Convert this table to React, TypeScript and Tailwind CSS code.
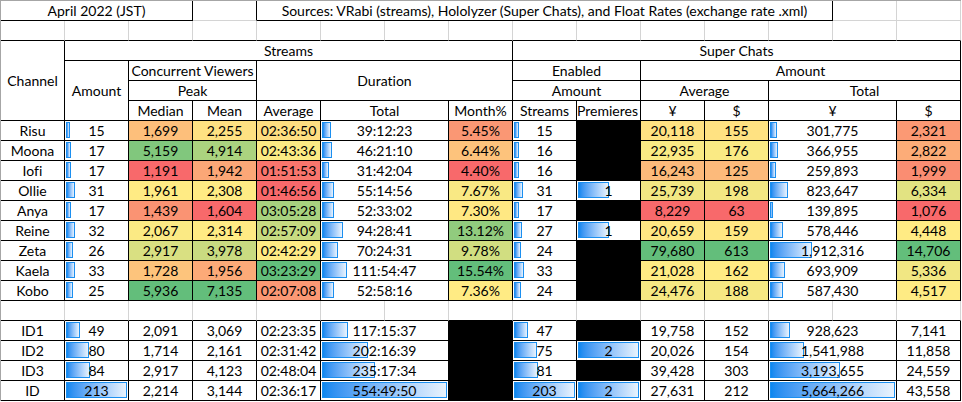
import React from 'react';

type Row = {
  name: string;
  amount: number;
  median: number;
  mean: number;
  avg: string;
  total: string;
  month: number | null;
  scStreams: number;
  premieres: number | null;
  yenAvg: number;
  usdAvg: number;
  yenTotal: number;
  usdTotal: number;
};

const members: Row[] = [
  { name: 'Risu', amount: 15, median: 1699, mean: 2255, avg: '02:36:50', total: '39:12:23', month: 5.45, scStreams: 15, premieres: null, yenAvg: 20118, usdAvg: 155, yenTotal: 301775, usdTotal: 2321 },
  { name: 'Moona', amount: 17, median: 5159, mean: 4914, avg: '02:43:36', total: '46:21:10', month: 6.44, scStreams: 16, premieres: null, yenAvg: 22935, usdAvg: 176, yenTotal: 366955, usdTotal: 2822 },
  { name: 'Iofi', amount: 17, median: 1191, mean: 1942, avg: '01:51:53', total: '31:42:04', month: 4.4, scStreams: 16, premieres: null, yenAvg: 16243, usdAvg: 125, yenTotal: 259893, usdTotal: 1999 },
  { name: 'Ollie', amount: 31, median: 1961, mean: 2308, avg: '01:46:56', total: '55:14:56', month: 7.67, scStreams: 31, premieres: 1, yenAvg: 25739, usdAvg: 198, yenTotal: 823647, usdTotal: 6334 },
  { name: 'Anya', amount: 17, median: 1439, mean: 1604, avg: '03:05:28', total: '52:33:02', month: 7.3, scStreams: 17, premieres: null, yenAvg: 8229, usdAvg: 63, yenTotal: 139895, usdTotal: 1076 },
  { name: 'Reine', amount: 32, median: 2067, mean: 2314, avg: '02:57:09', total: '94:28:41', month: 13.12, scStreams: 27, premieres: 1, yenAvg: 20659, usdAvg: 159, yenTotal: 578446, usdTotal: 4448 },
  { name: 'Zeta', amount: 26, median: 2917, mean: 3978, avg: '02:42:29', total: '70:24:31', month: 9.78, scStreams: 24, premieres: null, yenAvg: 79680, usdAvg: 613, yenTotal: 1912316, usdTotal: 14706 },
  { name: 'Kaela', amount: 33, median: 1728, mean: 1956, avg: '03:23:29', total: '111:54:47', month: 15.54, scStreams: 33, premieres: null, yenAvg: 21028, usdAvg: 162, yenTotal: 693909, usdTotal: 5336 },
  { name: 'Kobo', amount: 25, median: 5936, mean: 7135, avg: '02:07:08', total: '52:58:16', month: 7.36, scStreams: 24, premieres: null, yenAvg: 24476, usdAvg: 188, yenTotal: 587430, usdTotal: 4517 },
];

const groups: Row[] = [
  { name: 'ID1', amount: 49, median: 2091, mean: 3069, avg: '02:23:35', total: '117:15:37', month: null, scStreams: 47, premieres: null, yenAvg: 19758, usdAvg: 152, yenTotal: 928623, usdTotal: 7141 },
  { name: 'ID2', amount: 80, median: 1714, mean: 2161, avg: '02:31:42', total: '202:16:39', month: null, scStreams: 75, premieres: 2, yenAvg: 20026, usdAvg: 154, yenTotal: 1541988, usdTotal: 11858 },
  { name: 'ID3', amount: 84, median: 2917, mean: 4123, avg: '02:48:04', total: '235:17:34', month: null, scStreams: 81, premieres: null, yenAvg: 39428, usdAvg: 303, yenTotal: 3193655, usdTotal: 24559 },
  { name: 'ID', amount: 213, median: 2214, mean: 3144, avg: '02:36:17', total: '554:49:50', month: null, scStreams: 203, premieres: 2, yenAvg: 27631, usdAvg: 212, yenTotal: 5664266, usdTotal: 43558 },
];

const secs = (t: string) => {
  const [h, m, s] = t.split(':').map(Number);
  return h * 3600 + m * 60 + s;
};

const fmt = (n: number) => n.toLocaleString('en-US');

// Excel-style 3 colour scale: red -> yellow (50th percentile) -> green
const RED = [248, 105, 107];
const YEL = [255, 235, 132];
const GRN = [99, 190, 123];

function colorScale(values: number[]) {
  const sorted = [...values].sort((a, b) => a - b);
  const min = sorted[0];
  const max = sorted[sorted.length - 1];
  const mid = sorted[Math.floor(sorted.length / 2)];
  return (v: number) => {
    let from = RED, to = YEL, t = 0;
    if (v <= mid) {
      t = mid === min ? 0 : (v - min) / (mid - min);
    } else {
      from = YEL;
      to = GRN;
      t = max === mid ? 1 : (v - mid) / (max - mid);
    }
    const c = from.map((f, i) => Math.round(f + (to[i] - f) * t));
    return `rgb(${c[0]},${c[1]},${c[2]})`;
  };
}

const medianColor = colorScale(members.map(m => m.median));
const meanColor = colorScale(members.map(m => m.mean));
const avgColor = colorScale(members.map(m => secs(m.avg)));
const monthColor = colorScale(members.map(m => m.month ?? 0));
const yenAvgColor = colorScale(members.map(m => m.yenAvg));
const usdAvgColor = colorScale(members.map(m => m.usdAvg));
const usdTotalColor = colorScale(members.map(m => m.usdTotal));

const maxAmount = 213;
const maxTotal = secs('554:49:50');
const maxScStreams = 203;
const maxPremieres = 2;
const maxYenTotal = 5664266;

type CellProps = {
  className?: string;
  gr?: boolean;
  gb?: boolean;
  style?: React.CSSProperties;
  children?: React.ReactNode;
};

const Cell: React.FC<CellProps> = ({ className = '', gr, gb, style, children }) => (
  <div
    style={style}
    className={`relative flex items-center justify-center overflow-hidden whitespace-nowrap border-r border-b ${
      gr ? 'border-r-[#d4d4d4]' : 'border-r-black'
    } ${gb ? 'border-b-[#d4d4d4]' : 'border-b-black'} ${className}`}
  >
    {children}
  </div>
);

const Bar: React.FC<{ value: number; max: number; wide?: boolean }> = ({ value, max, wide }) => (
  <div
    className="absolute left-[1px] top-[1px] bottom-[2px] border border-[#1b8ff0] bg-linear-to-r from-[#0a87ef] to-[#e9f3fd]"
    style={{ width: Math.max(3, Math.round((value / max) * (wide ? 125 : 61))) }}
  />
);

const Txt: React.FC<{ children: React.ReactNode }> = ({ children }) => (
  <span className="relative pt-px">{children}</span>
);

function DataRow({ r, group }: { r: Row; group?: boolean }) {
  const bg = (fn: (v: number) => string, v: number) => (group ? undefined : { backgroundColor: fn(v) });
  return (
    <>
      <Cell><Txt>{r.name}</Txt></Cell>
      <Cell><Bar value={r.amount} max={maxAmount} /><Txt>{r.amount}</Txt></Cell>
      <Cell style={bg(medianColor, r.median)}><Txt>{fmt(r.median)}</Txt></Cell>
      <Cell style={bg(meanColor, r.mean)}><Txt>{fmt(r.mean)}</Txt></Cell>
      <Cell style={bg(avgColor, secs(r.avg))}><Txt>{r.avg}</Txt></Cell>
      <Cell className="col-span-2"><Bar value={secs(r.total)} max={maxTotal} wide /><Txt>{r.total}</Txt></Cell>
      {r.month === null ? (
        <Cell className="bg-black" />
      ) : (
        <Cell style={bg(monthColor, r.month)}><Txt>{r.month.toFixed(2)}%</Txt></Cell>
      )}
      <Cell><Bar value={r.scStreams} max={maxScStreams} /><Txt>{r.scStreams}</Txt></Cell>
      {r.premieres === null ? (
        <Cell className="bg-black" />
      ) : (
        <Cell><Bar value={r.premieres} max={maxPremieres} /><Txt>{r.premieres}</Txt></Cell>
      )}
      <Cell style={bg(yenAvgColor, r.yenAvg)}><Txt>{fmt(r.yenAvg)}</Txt></Cell>
      <Cell style={bg(usdAvgColor, r.usdAvg)}><Txt>{fmt(r.usdAvg)}</Txt></Cell>
      <Cell className="col-span-2"><Bar value={r.yenTotal} max={maxYenTotal} wide /><Txt>{fmt(r.yenTotal)}</Txt></Cell>
      <Cell style={bg(usdTotalColor, r.usdTotal)}><Txt>{fmt(r.usdTotal)}</Txt></Cell>
    </>
  );
}

const fifteen = Array.from({ length: 15 }, (_, i) => i);

export default function App() {
  return (
    <div className="min-h-screen bg-white text-black font-['Lato','Liberation_Sans',sans-serif] text-[14px] leading-none [font-variant-ligatures:none]">
      <div className="grid w-fit grid-cols-[repeat(15,64px)] auto-rows-[20px] border-t border-l border-[#a6a6a6]">
        {/* title row */}
        <Cell className="col-span-3"><Txt>April 2022 (JST)</Txt></Cell>
        <Cell gb />
        <Cell className="col-span-9">
          <Txt>Sources: VRabi (streams), Hololyzer (Super Chats), and Float Rates (exchange rate .xml)</Txt>
        </Cell>
        <Cell gr gb />
        <Cell gr gb />

        {/* spacer row */}
        {fifteen.map(i => (
          <Cell key={`s${i}`} gr />
        ))}

        {/* headers */}
        <Cell className="row-span-4"><Txt>Channel</Txt></Cell>
        <Cell className="col-span-7"><Txt>Streams</Txt></Cell>
        <Cell className="col-span-7"><Txt>Super Chats</Txt></Cell>

        <Cell className="row-span-3"><Txt>Amount</Txt></Cell>
        <Cell className="col-span-2"><Txt>Concurrent Viewers</Txt></Cell>
        <Cell className="col-span-4 row-span-2"><Txt>Duration</Txt></Cell>
        <Cell className="col-span-2"><Txt>Enabled</Txt></Cell>
        <Cell className="col-span-5"><Txt>Amount</Txt></Cell>

        <Cell className="col-span-2"><Txt>Peak</Txt></Cell>
        <Cell className="col-span-2"><Txt>Amount</Txt></Cell>
        <Cell className="col-span-2"><Txt>Average</Txt></Cell>
        <Cell className="col-span-3"><Txt>Total</Txt></Cell>

        <Cell><Txt>Median</Txt></Cell>
        <Cell><Txt>Mean</Txt></Cell>
        <Cell><Txt>Average</Txt></Cell>
        <Cell className="col-span-2"><Txt>Total</Txt></Cell>
        <Cell><Txt>Month%</Txt></Cell>
        <Cell><Txt>Streams</Txt></Cell>
        <Cell className="justify-start"><Txt>Premieres</Txt></Cell>
        <Cell><Txt>¥</Txt></Cell>
        <Cell><Txt>$</Txt></Cell>
        <Cell className="col-span-2"><Txt>¥</Txt></Cell>
        <Cell><Txt>$</Txt></Cell>

        {members.map(r => (
          <DataRow key={r.name} r={r} />
        ))}

        {/* blank separator row */}
        {fifteen.map(i => (
          <Cell key={`b${i}`} gr />
        ))}

        {groups.map(r => (
          <DataRow key={r.name} r={r} group />
        ))}
      </div>
    </div>
  );
}
